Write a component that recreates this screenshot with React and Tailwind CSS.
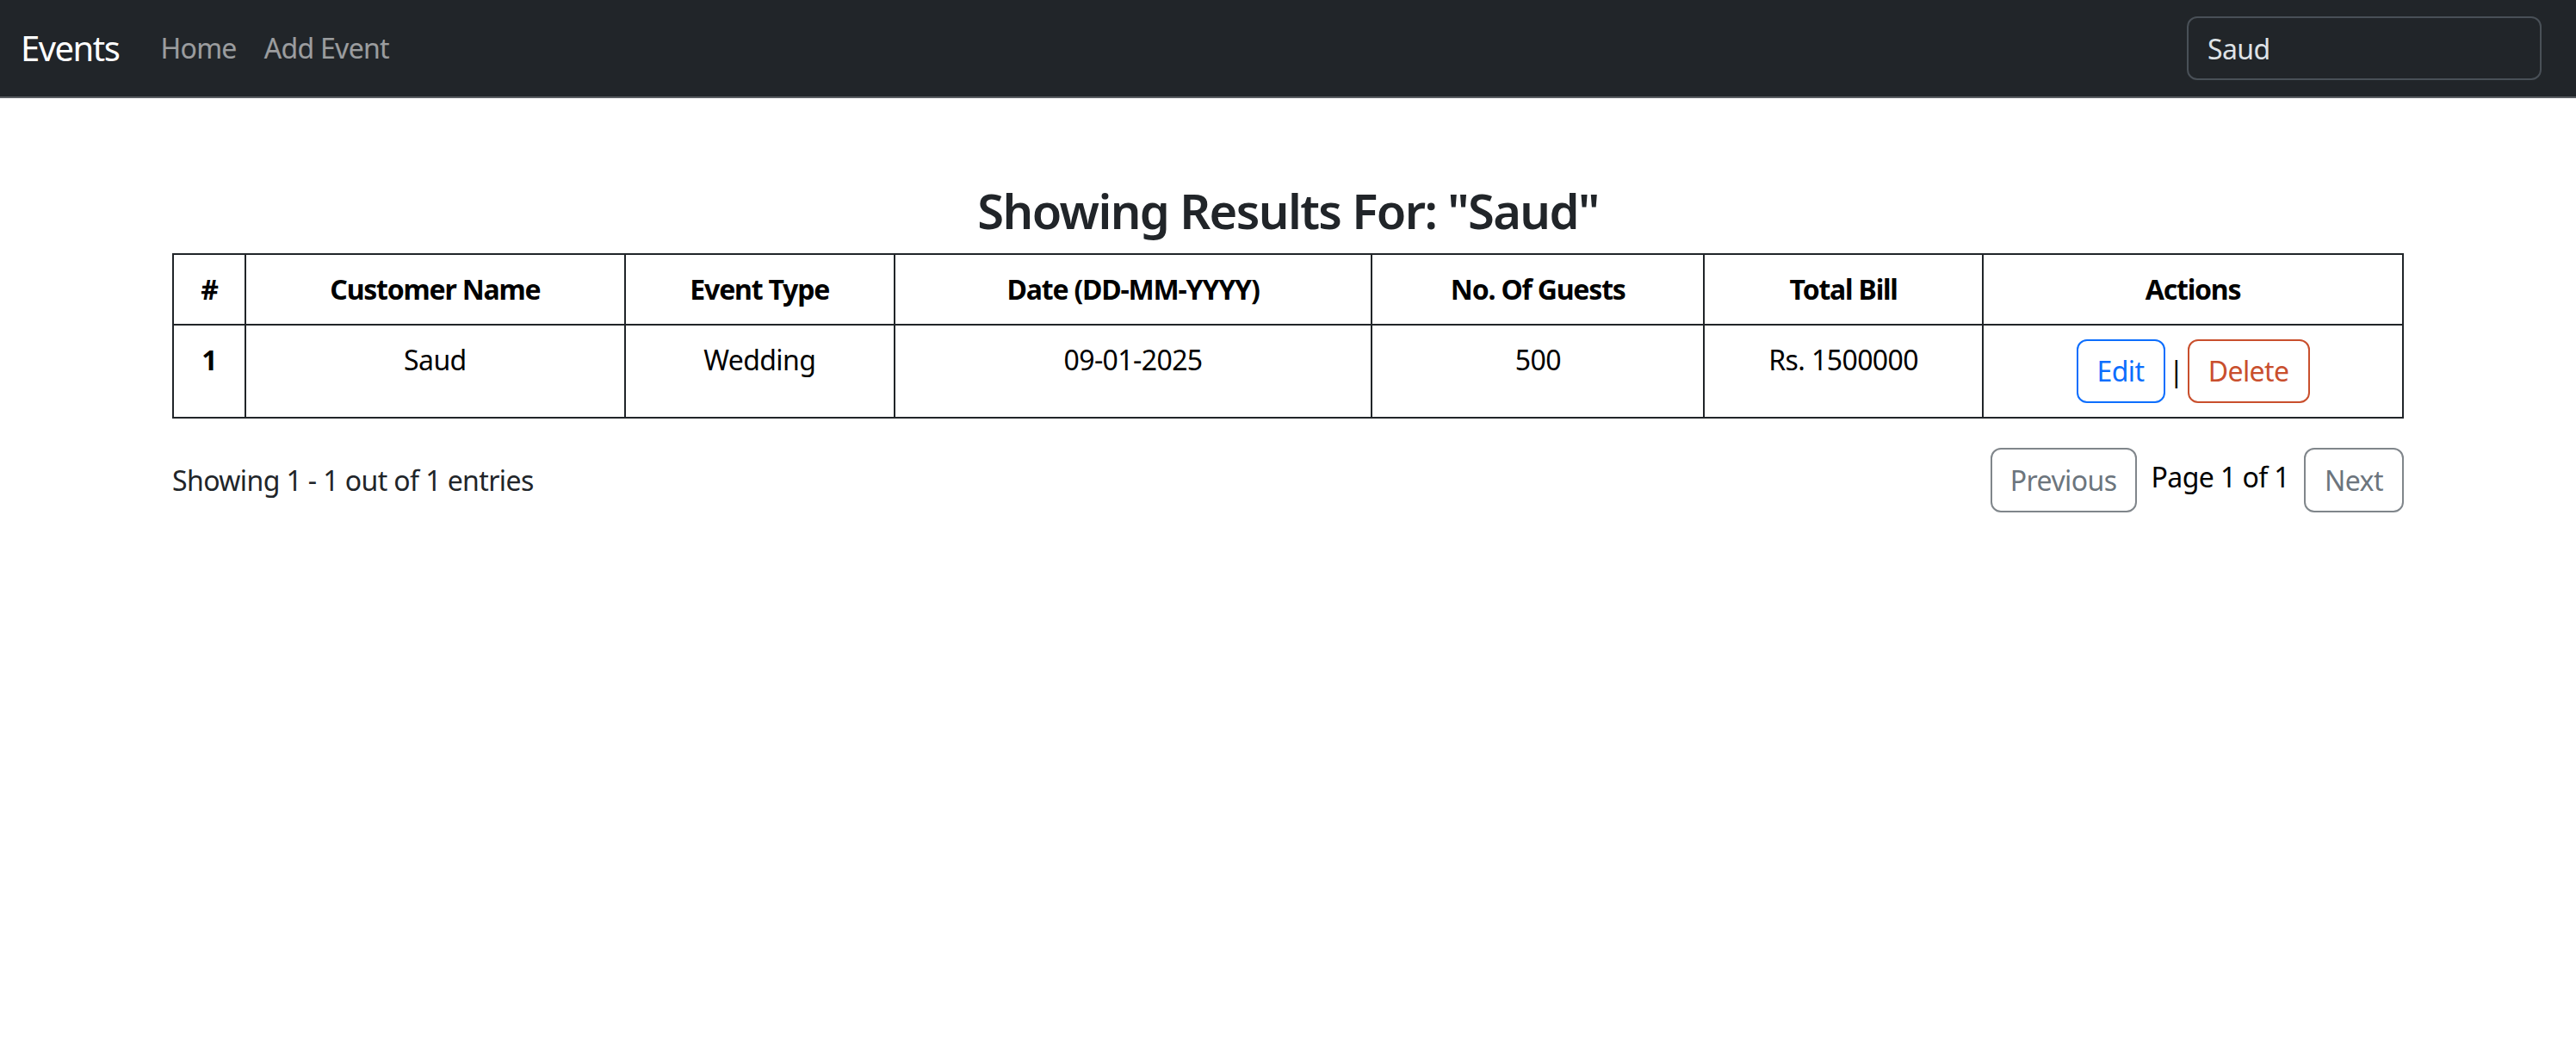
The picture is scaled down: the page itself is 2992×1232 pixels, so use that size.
import React from 'react';

const columns = [
  { label: '#', width: 'w-[84px]' },
  { label: 'Customer Name', width: 'w-[441px]' },
  { label: 'Event Type', width: 'w-[313px]' },
  { label: 'Date (DD-MM-YYYY)', width: 'w-[555px]' },
  { label: 'No. Of Guests', width: 'w-[386px]' },
  { label: 'Total Bill', width: 'w-[324px]' },
  { label: 'Actions', width: 'w-[488px]' },
];

const events = [
  { id: 1, customer: 'Saud', type: 'Wedding', date: '09-01-2025', guests: 500, bill: 'Rs. 1500000' },
];

const Navbar = () => (
  <nav className="h-[114px] bg-[#212529] border-b-2 border-[#5a5e63] flex items-center pl-[24px] pr-[40px]">
    <span className="text-[40px] leading-[60px] tracking-[-1.5px] text-white mr-[32px]">Events</span>
    <a className="px-[16px] text-[32px] leading-[48px] tracking-[-0.7px] text-white/55">Home</a>
    <a className="px-[16px] text-[32px] leading-[48px] tracking-[-0.7px] text-white/55">Add Event</a>
    <input
      defaultValue="Saud"
      className="ml-auto w-[412px] h-[74px] rounded-[12px] border-2 border-[#495057] bg-[#212529] px-[22px] text-[32px] tracking-[-0.6px] text-[#dee2e6] outline-none"
    />
  </nav>
);

const cell = 'border-2 border-[#212529] py-[16px] px-[16px] text-center align-top';

const App = () => {
  return (
    <div className="min-h-screen bg-white text-[#212529] font-['Segoe_UI','Noto_Sans',sans-serif]">
      <Navbar />

      <div className="w-[2592px] mx-auto mt-[97px]">
        <h3 className="text-center text-[56px] leading-[67px] font-semibold tracking-[-1.6px] mb-[16px]">
          Showing Results For: "Saud"
        </h3>

        <table className="w-full border-collapse border-2 border-[#212529] text-[32px] leading-[48px] tracking-[-0.6px] text-black">
          <thead>
            <tr>
              {columns.map((c) => (
                <th key={c.label} className={`${c.width} ${cell} font-bold tracking-[-1.2px]`}>
                  {c.label}
                </th>
              ))}
            </tr>
          </thead>
          <tbody>
            {events.map((e) => (
              <tr key={e.id}>
                <td className={`${cell} font-bold`}>{e.id}</td>
                <td className={cell}>{e.customer}</td>
                <td className={cell}>{e.type}</td>
                <td className={cell}>{e.date}</td>
                <td className={cell}>{e.guests}</td>
                <td className={cell}>{e.bill}</td>
                <td className="border-2 border-[#212529] py-[16px] px-[16px] align-top">
                  <div className="flex items-center justify-center">
                    <button className="w-[103px] h-[74px] rounded-[12px] border-2 border-[#0d6efd] text-[#0d6efd]">Edit</button>
                    <span className="w-[26px] text-center text-black">|</span>
                    <button className="w-[142px] h-[74px] rounded-[12px] border-2 border-[#c94f2d] text-[#c94f2d]">Delete</button>
                  </div>
                </td>
              </tr>
            ))}
          </tbody>
        </table>

        <div className="mt-[34px] flex items-center justify-between text-[32px] leading-[48px] tracking-[-0.6px]">
          <span>Showing 1 - 1 out of 1 entries</span>
          <div className="flex items-center">
            <button disabled className="w-[170px] h-[75px] rounded-[12px] border-2 border-[#80868b] text-[#6c757d]">Previous</button>
            <span className="mx-[17px] -mt-[8px] text-black">Page 1 of 1</span>
            <button disabled className="w-[116px] h-[75px] rounded-[12px] border-2 border-[#80868b] text-[#6c757d]">Next</button>
          </div>
        </div>
      </div>
    </div>
  );
};

export default App;
